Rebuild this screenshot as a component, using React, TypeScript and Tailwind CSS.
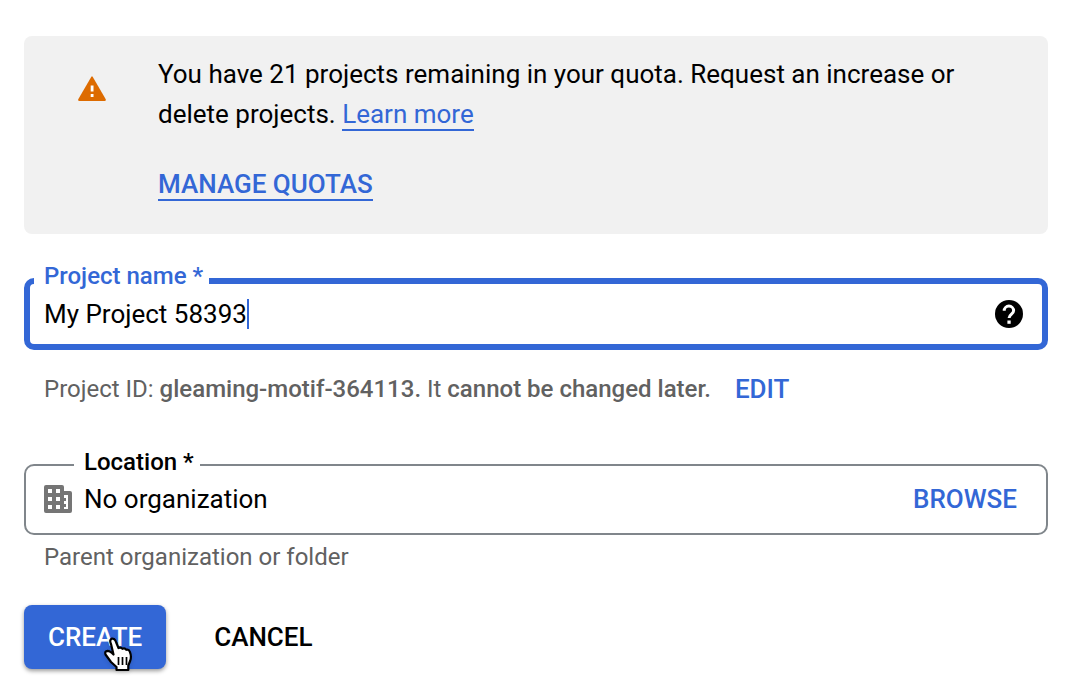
import { useState } from "react";

function WarningIcon() {
  return (
    <svg viewBox="0 0 28 25" className="mt-[22px] h-[25px] w-7 shrink-0" aria-hidden="true">
      <path d="M13.2 .9Q14 -.4 14.8 .9L27.6 23Q28.4 25 26.6 25H1.4Q-.4 25 .4 23Z" fill="#dd6b00" />
      <path d="M12.7 9.500h2.800v6h-2.800zM12.700 18h2.800v3h-2.800z" fill="#fff" />
    </svg>
  );
}

function HelpIcon() {
  return (
    <svg viewBox="0 0 28 28" className="size-7" aria-hidden="true">
      <circle cx="14" cy="14" r="14" fill="#000" />
      <path
        d="M9.200 10.800a4.700 4.700 0 0 1 9.400 0c0 3.200-4.500 3.500-4.500 7.200"
        fill="none"
        stroke="#fff"
        strokeWidth="3"
      />
      <path d="M12.400 20.500h3.300v3.300h-3.300z" fill="#fff" />
    </svg>
  );
}

function OrganizationIcon() {
  return (
    <svg viewBox="0 0 28 28" className="size-7 shrink-0" aria-hidden="true">
      <path
        d="M2 0h16q2 0 2 2v4h6q2 0 2 2v18q0 2-2 2H2q-2 0-2-2V2q0-2 2-2z"
        fill="#757575"
      />
      <path
        d="M4 4h4v4H4zM12 4h4v4h-4zM4 12h4v4H4zM12 12h4v4h-4zM4 20h4v4H4zM12 20h4v4h-4zM20 10h4v14h-4v-2h2v-3h-2v-3h2v-3h-2z"
        fill="#fff"
      />
    </svg>
  );
}

function HandPointer() {
  return (
    <svg
      viewBox="0 0 32 36"
      className="pointer-events-none absolute top-8 left-[79px] h-9 w-8 drop-shadow-sm"
      aria-hidden="true"
    >
      <path
        d="M7.500 3Q8.500 .8 11 2q1.500 1 2.200 3.500L15.500 11q2.500-1.200 4 .8 2.300-1 3.800 1 2.500-.8 3.600 2 1.800 4.500.4 8.700l-2 5V33H13.500v-3l-5.500-5-5.500-7.500q-1-3.500 2-3.600 2.500 0 6 3.600L8 7Q6.800 4.500 7.500 3z"
        fill="#fff"
        stroke="#000"
        strokeWidth="2.200"
        strokeLinejoin="round"
      />
      <path d="M15.500 20v8M19.500 20v8M23.500 20v8" stroke="#000" strokeWidth="1.700" />
    </svg>
  );
}

export default function App() {
  const [name, setName] = useState("My Project 58393");

  return (
    <main className="bg-white pt-9 pr-[38px] pb-4 pl-6 font-[Roboto,sans-serif] text-[26px] leading-10 text-black">
      <section className="flex gap-[52px] rounded-lg bg-[#f1f1f1] pt-[18px] pr-16 pb-[30px] pl-[54px]">
        <WarningIcon />
        <div>
          <p>
            You have 21 projects remaining in your quota. Request an increase or delete projects.{" "}
            <a href="#learn-more" className="border-b-2 border-[#3367d6] text-[#3367d6]">
              Learn more
            </a>
          </p>
          <p className="mt-[30px]">
            <a href="#quotas" className="border-b-2 border-[#3367d6] font-medium text-[#3367d6]">
              MANAGE QUOTAS
            </a>
          </p>
        </div>
      </section>

      <form onSubmit={(event) => event.preventDefault()}>
        <div className="relative mt-11 flex h-[72px] items-center rounded-[10px] border-6 border-[#3367d6] pr-[19px] pl-[14px]">
          <label
            htmlFor="project-name"
            className="absolute -top-6 left-1 bg-white pr-1.5 pl-[10px] text-2xl leading-8 font-medium text-[#3367d6]"
          >
            Project name *
          </label>
          <div className="flex grow items-center">
            <input
              id="project-name"
              value={name}
              onChange={(event) => setName(event.target.value)}
              className="h-10 min-w-0 field-sizing-content caret-transparent outline-none"
            />
            <span className="h-[30px] w-0.5 bg-[#3367d6]" />
          </div>
          <button type="button" aria-label="Project name help">
            <HelpIcon />
          </button>
        </div>

        <div className="mt-[19px] flex items-center gap-6 pl-5">
          <p className="text-2xl leading-10 text-[#616161]">
            Project ID: <strong className="font-medium">gleaming-motif-364113.</strong> It{" "}
            <strong className="font-medium">cannot be changed later.</strong>
          </p>
          <button type="button" className="font-medium text-[#3367d6]">
            EDIT
          </button>
        </div>

        <div className="relative mt-[55px] flex h-[71px] items-center gap-3 rounded-[10px] border-2 border-[#80868b] pr-[29px] pb-0.5 pl-[18px]">
          <label
            htmlFor="location"
            className="absolute -top-5 left-12 bg-white pr-1.5 pl-[10px] text-2xl leading-8 font-medium"
          >
            Location *
          </label>
          <OrganizationIcon />
          <input
            id="location"
            readOnly
            value="No organization"
            className="h-10 min-w-0 grow outline-none"
          />
          <button type="button" className="font-medium text-[#3367d6]">
            BROWSE
          </button>
        </div>
        <p className="mt-0.5 pl-5 text-2xl leading-10 text-[#616161]">Parent organization or folder</p>

        <div className="mt-7 flex items-center gap-6">
          <button
            type="submit"
            className="relative h-16 rounded-lg bg-[#3367d6] px-6 font-medium text-white shadow-[0_2px_4px_#00000066]"
          >
            CREATE
            <HandPointer />
          </button>
          <button type="button" className="h-16 px-6 font-medium">
            CANCEL
          </button>
        </div>
      </form>
    </main>
  );
}
